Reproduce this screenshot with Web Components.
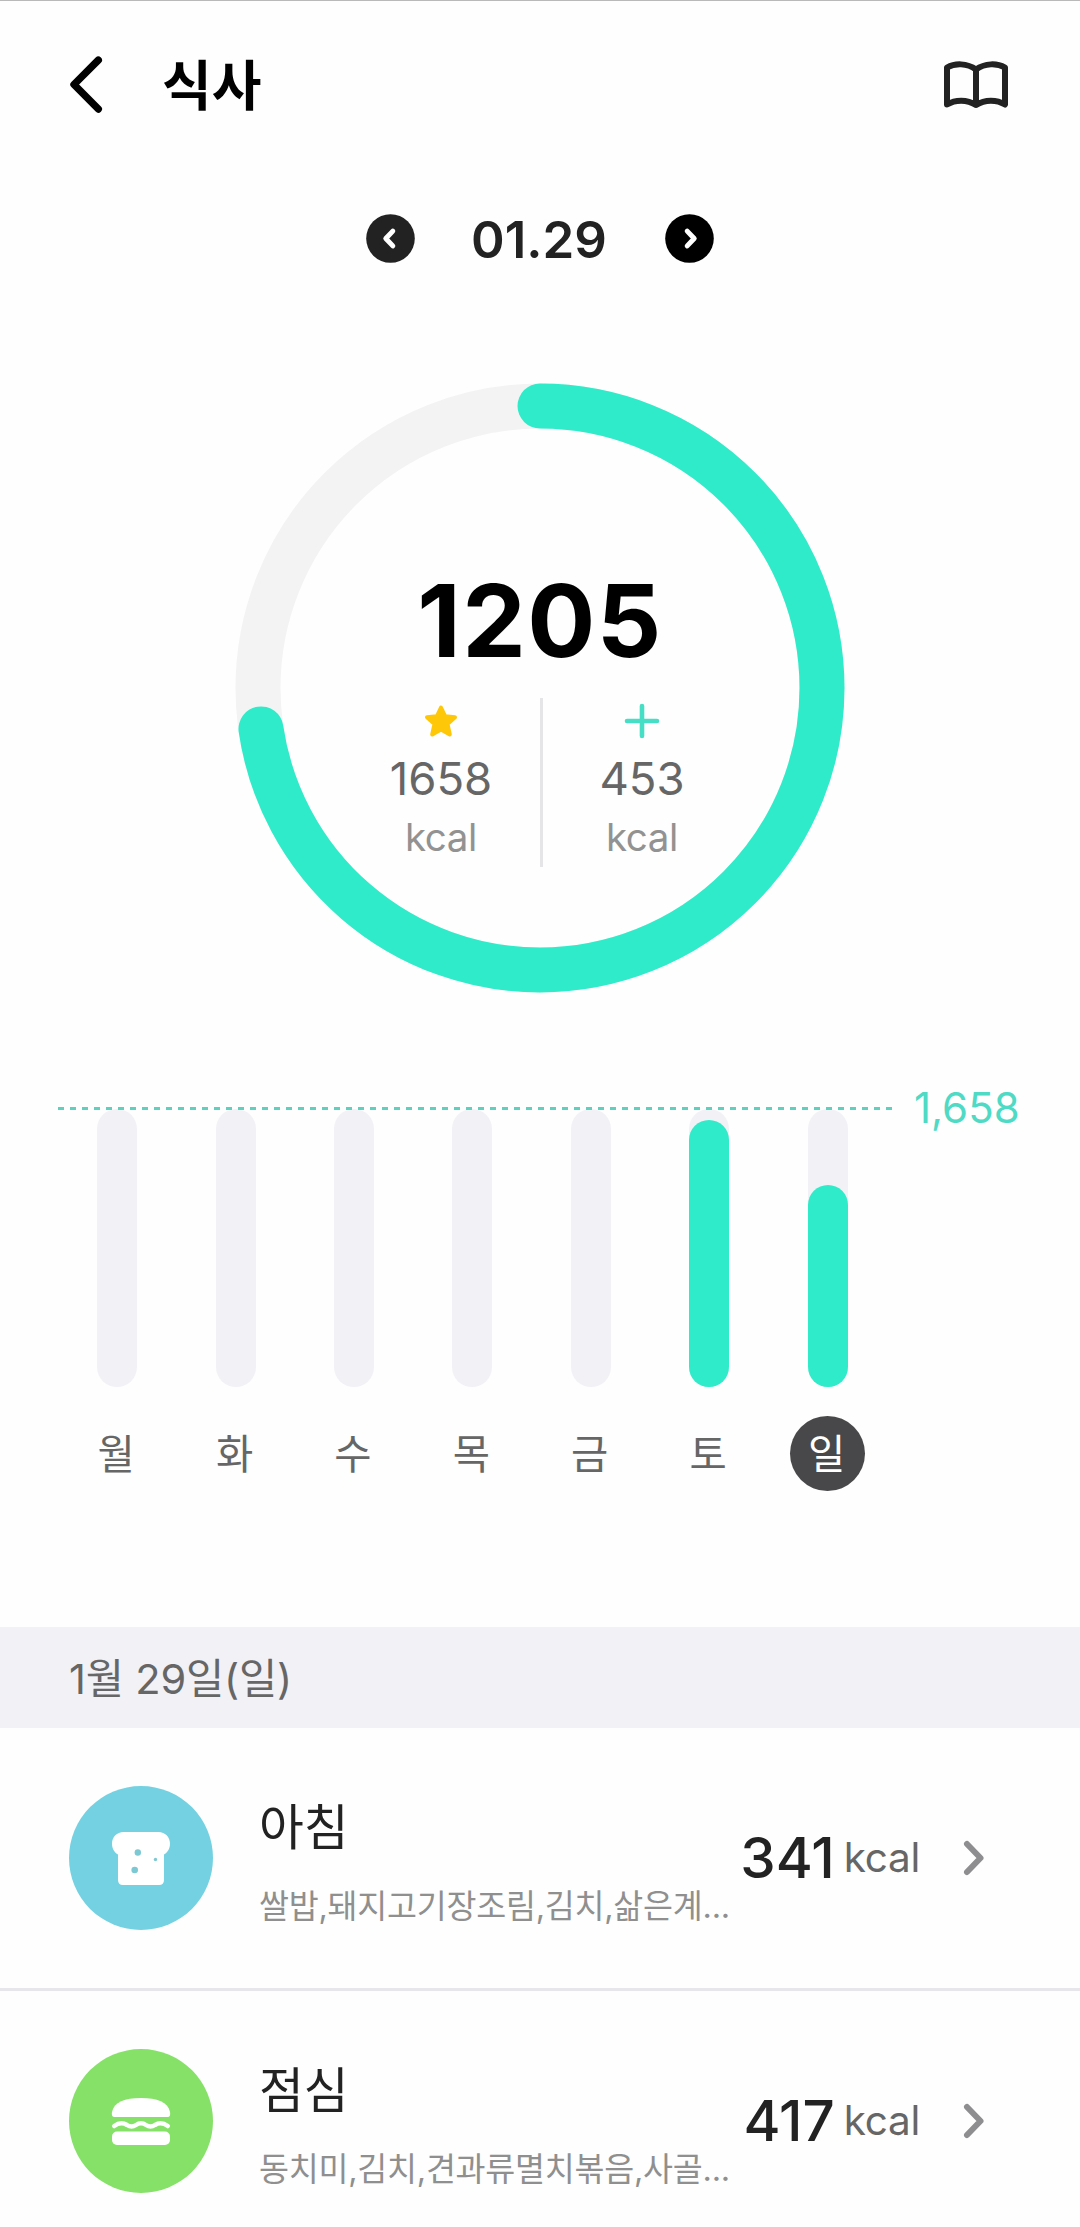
<!DOCTYPE html>
<html lang="ko">
<head>
<meta charset="utf-8">
<title>식사</title>
<style>
    html {
        overflow: hidden;
    }
    body {
        margin: 0;
        width: 1080px;
        height: 2227px;
        overflow: hidden;
        background: #fefefe;
        color: #222;
        font-family: Inter, "Noto Sans CJK KR", sans-serif;
        --accent: #30ebc9;
        --track: #f2f1f6;
    }
</style>
</head>
<body>
<app-header>식사</app-header>
<date-nav>01.29</date-nav>
<calorie-ring eaten="1205" goal="1658"></calorie-ring>
<week-chart goal="1,658">
    <day-bar day="월"></day-bar>
    <day-bar day="화"></day-bar>
    <day-bar day="수"></day-bar>
    <day-bar day="목"></day-bar>
    <day-bar day="금"></day-bar>
    <day-bar day="토" percent="96"></day-bar>
    <day-bar day="일" percent="72.7" active></day-bar>
</week-chart>
<section-title>1월 29일(일)</section-title>
<meal-row name="아침" kcal="341" color="#74d1e1">
    <svg slot="icon" width="60" height="54" viewBox="0 0 60 54">
        <path fill="#fff" d="M12.5 1H47.500C54 1 59 6 59 12.500C59 18 56.500 21.500 53 23.500V49Q53 54 48 54H12Q7 54 7 49V23.500C3.500 21.500 1 18 1 12.500C1 6 6 1 12.500 1Z"/>
        <g fill="#7cc8d3">
            <circle cx="26.800" cy="21.500" r="3.200"/>
            <circle cx="44.500" cy="28.500" r="1.700"/>
            <circle cx="23.700" cy="39" r="3.300"/>
        </g>
    </svg>
    쌀밥,돼지고기장조림,김치,삶은계...
</meal-row>
<meal-row name="점심" kcal="417" color="#86e168">
    <svg slot="icon" width="60" height="48" viewBox="0 0 60 48">
        <path fill="#fff" d="M1 15C3 5 14 1 30 1S57 5 59 15Q60 20 56.500 20H3.500Q0 20 1 15Z"/>
        <path fill="none" stroke="#fff" stroke-width="4.500" stroke-linecap="round" d="M3.200 29C8 25.500 12 25.500 16 28C19 30 22 30 25 28C28 26 32 26 35 28C38 30 41 30 44 28C48 25.500 52 25.500 56.800 29"/>
        <rect fill="#fff" x="1" y="34.500" width="58" height="13.500" rx="5"/>
    </svg>
    동치미,김치,견과류멸치볶음,사골...
</meal-row>

<script>
class AppHeader extends HTMLElement {
    constructor() {
        super();
        this.attachShadow({ mode: 'open' });
    }

    connectedCallback() {
        this.shadowRoot.innerHTML = `
            <style>
                :host {
                    display: flex;
                    align-items: center;
                    box-sizing: border-box;
                    height: 170px;
                    padding: 0 69px 2px 66px;
                    border-top: 1px solid #b9b9b9;
                    color: #000;
                }
                svg {
                    display: block;
                }
                h1 {
                    flex: 1;
                    margin: 0 0 0 56px;
                    padding-top: 5px;
                    font-size: 54px;
                    font-weight: 700;
                    line-height: 64px;
                }
            </style>
            <svg width="40" height="60" viewBox="0 0 40 60">
                <path d="M32.300 5.200L8 29.500L32.300 54" fill="none" stroke="#000" stroke-width="7.400" stroke-linecap="round" stroke-linejoin="round"/>
            </svg>
            <h1><slot></slot></h1>
            <svg width="70" height="48" viewBox="0 0 70 48">
                <path d="M35 8.500C26 2 14 2 6 6.500V43.500C14 38.500 26 38 35 44C44 38 56 38.500 64 43.500V6.500C56 2 44 2 35 8.500ZM35 8.500V44" fill="none" stroke="#222" stroke-width="6" stroke-linecap="round" stroke-linejoin="round"/>
            </svg>
        `;
    }
}

class DateNav extends HTMLElement {
    constructor() {
        super();
        this.attachShadow({ mode: 'open' });
    }

    connectedCallback() {
        this.shadowRoot.innerHTML = `
            <style>
                :host {
                    display: flex;
                    justify-content: center;
                    align-items: center;
                    height: 49px;
                    margin-top: 44px;
                }
                svg {
                    display: block;
                }
                span {
                    box-sizing: border-box;
                    width: 250px;
                    padding: 2px 2px 0 0;
                    text-align: center;
                    font-size: 51px;
                    font-weight: 600;
                    line-height: 49px;
                }
            </style>
            <svg width="49" height="49" viewBox="0 0 49 49">
                <circle cx="24.500" cy="24.500" r="24.300" fill="#222"/>
                <path d="M26.800 17.100L19.800 24.500L26.800 31.900" fill="none" stroke="#fff" stroke-width="5" stroke-linecap="round" stroke-linejoin="round"/>
            </svg>
            <span><slot></slot></span>
            <svg width="49" height="49" viewBox="0 0 49 49">
                <circle cx="24.500" cy="24.500" r="24.300" fill="#000"/>
                <path d="M22.200 17.100L29.200 24.500L22.200 31.900" fill="none" stroke="#fff" stroke-width="5" stroke-linecap="round" stroke-linejoin="round"/>
            </svg>
        `;
    }
}

class CalorieRing extends HTMLElement {
    constructor() {
        super();
        this.attachShadow({ mode: 'open' });
    }

    connectedCallback() {
        const eaten = Number(this.getAttribute('eaten'));
        const goal = Number(this.getAttribute('goal'));
        const progress = eaten / goal * 100;

        this.shadowRoot.innerHTML = `
            <style>
                :host {
                    display: grid;
                    justify-content: center;
                    margin-top: 120px;
                }
                .ring, .content {
                    grid-area: 1 / 1;
                }
                svg {
                    display: block;
                }
                .content {
                    display: flex;
                    flex-direction: column;
                    align-items: center;
                    padding-top: 186px;
                }
                .eaten {
                    color: #000;
                    font-size: 101px;
                    font-weight: 700;
                    letter-spacing: 1.400px;
                    line-height: 102px;
                }
                .stats {
                    display: grid;
                    grid-template-columns: 199px 3px 197px;
                    height: 169px;
                    margin-top: 27px;
                }
                .stat {
                    display: flex;
                    flex-direction: column;
                    align-items: center;
                    padding: 5px 0 0 2px;
                }
                .divider {
                    background: #e5e5e8;
                }
                .value {
                    margin-top: 15px;
                    color: #666;
                    font-size: 45.500px;
                    line-height: 50px;
                }
                .unit {
                    margin-top: 8px;
                    color: #929292;
                    font-size: 38.500px;
                    letter-spacing: -0.400px;
                    line-height: 50px;
                }
            </style>
            <svg class="ring" width="610" height="610" viewBox="0 0 610 610">
                <g fill="none" stroke-width="45" transform="rotate(-90 305 305)">
                    <circle cx="305" cy="305" r="282" stroke="#f3f3f3"/>
                    <circle cx="305" cy="305" r="282" stroke="#30ebc9" stroke-linecap="round" pathLength="100" stroke-dasharray="${progress} 100"/>
                </g>
            </svg>
            <div class="content">
                <div class="eaten">${eaten}</div>
                <div class="stats">
                    <div class="stat">
                        <svg width="36" height="36" viewBox="0 0 36 36">
                            <path d="M18 4.500L22 13.200L32 14.200L24.500 21L26.800 31.500L18 26.500L9.200 31.500L11.500 21L4 14.200L14 13.200Z" fill="#fec708" stroke="#fec708" stroke-width="4" stroke-linejoin="round"/>
                        </svg>
                        <div class="value">${goal}</div>
                        <div class="unit">kcal</div>
                    </div>
                    <div class="divider"></div>
                    <div class="stat">
                        <svg width="36" height="36" viewBox="0 0 36 36">
                            <path d="M18 3V33M3 18H33" fill="none" stroke="#46dfc6" stroke-width="4.600" stroke-linecap="round"/>
                        </svg>
                        <div class="value">${goal - eaten}</div>
                        <div class="unit">kcal</div>
                    </div>
                </div>
            </div>
        `;
    }
}

class WeekChart extends HTMLElement {
    constructor() {
        super();
        this.attachShadow({ mode: 'open' });
    }

    connectedCallback() {
        this.shadowRoot.innerHTML = `
            <style>
                :host {
                    display: grid;
                    grid-template-columns: 834px auto;
                    justify-content: start;
                    column-gap: 22px;
                    margin: 114px 0 0 58px;
                }
                .days {
                    grid-area: 1 / 1;
                    display: grid;
                    grid-template-columns: repeat(7, 118.400px);
                    padding-top: 2px;
                }
                .line {
                    grid-area: 1 / 1;
                    display: block;
                }
                .goal {
                    color: #4fdac5;
                    font-size: 42px;
                    line-height: 2px;
                }
            </style>
            <div class="days"><slot></slot></div>
            <svg class="line" width="834" height="3">
                <path d="M0 1.500H834" stroke="#5fd0bd" stroke-width="3" stroke-dasharray="6 6"/>
            </svg>
            <div class="goal">${this.getAttribute('goal')}</div>
        `;
    }
}

class DayBar extends HTMLElement {
    constructor() {
        super();
        this.attachShadow({ mode: 'open' });
    }

    connectedCallback() {
        const percent = this.getAttribute('percent') || 0;

        this.shadowRoot.innerHTML = `
            <style>
                :host {
                    display: flex;
                    flex-direction: column;
                    align-items: center;
                }
                .track {
                    display: flex;
                    align-items: flex-end;
                    width: 40px;
                    height: 278px;
                    border-radius: 20px;
                    background: var(--track);
                }
                .fill {
                    width: 100%;
                    height: ${percent}%;
                    border-radius: 20px;
                    background: var(--accent);
                }
                .day {
                    box-sizing: border-box;
                    width: 75px;
                    height: 75px;
                    margin-top: 29px;
                    padding-right: 2px;
                    border-radius: 50%;
                    color: #666;
                    font-size: 40.500px;
                    line-height: 77px;
                    text-align: center;
                }
                :host([active]) .day {
                    background: #48484a;
                    color: #fff;
                }
            </style>
            <div class="track"><div class="fill"></div></div>
            <div class="day">${this.getAttribute('day')}</div>
        `;
    }
}

class SectionTitle extends HTMLElement {
    constructor() {
        super();
        this.attachShadow({ mode: 'open' });
    }

    connectedCallback() {
        this.shadowRoot.innerHTML = `
            <style>
                :host {
                    display: block;
                    height: 101px;
                    margin-top: 136px;
                    padding-left: 69px;
                    background: var(--track);
                    color: #666;
                    font-size: 41.500px;
                    letter-spacing: -0.150px;
                    line-height: 104px;
                }
            </style>
            <slot></slot>
        `;
    }
}

class MealRow extends HTMLElement {
    constructor() {
        super();
        this.attachShadow({ mode: 'open' });
    }

    connectedCallback() {
        this.shadowRoot.innerHTML = `
            <style>
                :host {
                    display: flex;
                    align-items: center;
                    height: 260px;
                    padding: 0 92px 0 69px;
                    border-bottom: 3px solid #e7e6eb;
                }
                .icon {
                    display: flex;
                    align-items: center;
                    justify-content: center;
                    width: 144px;
                    height: 144px;
                    border-radius: 50%;
                    background: ${this.getAttribute('color')};
                }
                .text {
                    flex: 1;
                    width: 0;
                    margin-left: 46px;
                    padding-top: 16px;
                    white-space: nowrap;
                }
                .name {
                    font-size: 48.700px;
                    line-height: 60px;
                }
                .foods {
                    margin-top: 20px;
                    color: #8f8f8f;
                    font-size: 32.600px;
                    letter-spacing: -0.250px;
                    line-height: 56px;
                }
                .kcal {
                    font-size: 56.500px;
                    font-weight: 500;
                    line-height: 60px;
                }
                .unit {
                    margin: 0 42px 0 9px;
                    color: #666;
                    font-size: 40.500px;
                    letter-spacing: -0.300px;
                    line-height: 60px;
                }
                svg {
                    display: block;
                }
            </style>
            <div class="icon"><slot name="icon"></slot></div>
            <div class="text">
                <div class="name">${this.getAttribute('name')}</div>
                <div class="foods"><slot></slot></div>
            </div>
            <div class="kcal">${this.getAttribute('kcal')}</div>
            <div class="unit">kcal</div>
            <svg width="26" height="40" viewBox="0 0 26 40">
                <path d="M5 6L18.500 20L5 34" fill="none" stroke="#8e8e91" stroke-width="6" stroke-linecap="round" stroke-linejoin="round"/>
            </svg>
        `;
    }
}

customElements.define('app-header', AppHeader);
customElements.define('date-nav', DateNav);
customElements.define('calorie-ring', CalorieRing);
customElements.define('week-chart', WeekChart);
customElements.define('day-bar', DayBar);
customElements.define('section-title', SectionTitle);
customElements.define('meal-row', MealRow);
</script>
</body>
</html>
